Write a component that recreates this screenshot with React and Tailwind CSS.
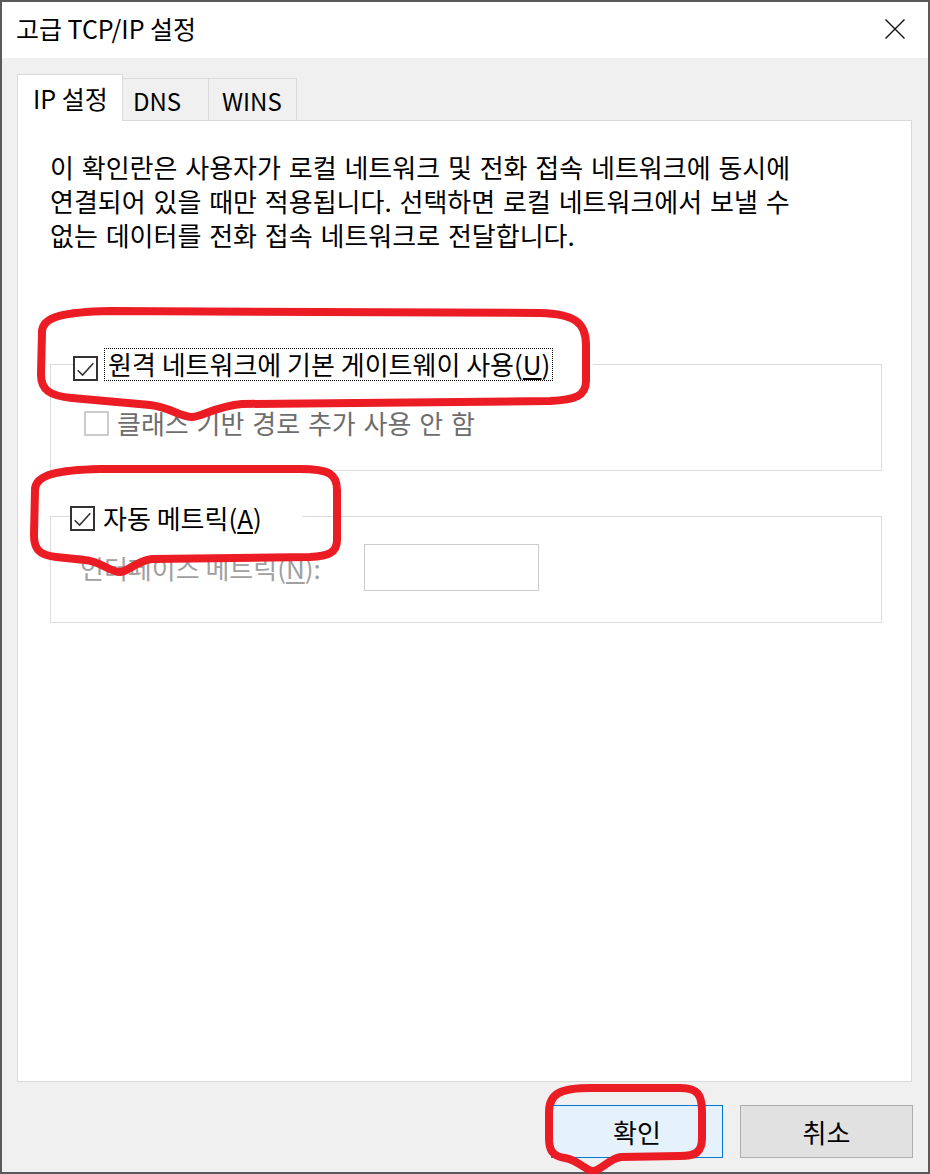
import React from "react";

function Check({ checked = false, disabled = false }) {
  return (
    <div
      className={
        "w-[25px] h-[25px] shrink-0 border-2 bg-white flex items-center justify-center " +
        (disabled ? "border-[#cccccc]" : "border-[#333333]")
      }
    >
      {checked && (
        <svg width="21" height="21" viewBox="0 0 21 21">
          <path d="M2.7 12.2 L7.6 17 L18.3 5.2" fill="none" stroke="#333333" strokeWidth="1.6" />
        </svg>
      )}
    </div>
  );
}

export default function App() {
  return (
    <div className="relative w-[930px] h-[1174px] font-['Noto_Sans_CJK_KR',sans-serif] text-black">
      <div className="w-[930px] h-[1174px] border-2 border-[#5a5a5a] bg-[#f0f0f0] flex flex-col">
        {/* title bar */}
        <div className="h-[56px] bg-white flex items-center justify-between pl-[14px] pr-[23px] shrink-0">
          <span className="text-[25px] leading-none -mt-[3px]">고급 TCP/IP 설정</span>
          <svg width="20" height="20" viewBox="0 0 20 20" className="-mt-[2px]">
            <path d="M0.5 0.5 L19.5 19.5 M19.5 0.5 L0.5 19.5" stroke="#111" strokeWidth="1.4" />
          </svg>
        </div>

        {/* body */}
        <div className="pl-[15px] pt-[16px] flex flex-col">
          {/* tabs */}
          <div className="flex items-end h-[46px]">
            <div className="relative z-10 h-[47px] -mb-px w-[106px] bg-white border-l border-t border-r border-[#d9d9d9] pl-[15px] flex items-center text-[25px] leading-none">
              <span className="mt-[1px]">IP 설정</span>
            </div>
            <div className="h-[42px] w-[86px] bg-[#f0f0f0] border-t border-r border-[#d9d9d9] pl-[10px] flex items-center text-[24px] leading-none">
              <span className="mt-[2px]">DNS</span>
            </div>
            <div className="h-[42px] w-[88px] bg-[#f0f0f0] border-t border-r border-[#d9d9d9] pl-[13px] flex items-center text-[24px] leading-none">
              <span className="mt-[2px]">WINS</span>
            </div>
          </div>

          {/* panel */}
          <div className="w-[895px] h-[962px] bg-white border border-[#d9d9d9] pl-[32px] pt-[29px] flex flex-col">
            <p className="text-[26px] leading-[34px] [word-spacing:2px]">
              <span className="block whitespace-nowrap">이 확인란은 사용자가 로컬 네트워크 및 전화 접속 네트워크에 동시에</span>
              <span className="block whitespace-nowrap">연결되어 있을 때만 적용됩니다. 선택하면 로컬 네트워크에서 보낼 수</span>
              <span className="block whitespace-nowrap">없는 데이터를 전화 접속 네트워크로 전달합니다.</span>
            </p>

            {/* group 1 */}
            <div className="mt-[112px] w-[832px] h-[107px] border border-[#dcdcdc] flex flex-col">
              <div className="-mt-[17px] ml-[22px] self-start flex items-end h-[33px] bg-white pr-[40px]">
                <Check checked />
                <div className="ml-[6px] h-[33px] border border-dotted border-black pl-[3px] pr-[2px] flex items-center text-[26px] leading-none whitespace-nowrap">
                  <span className="-mt-[1px]">
                    원격 네트워크에 기본 게이트웨이 사용(<span className="underline underline-offset-[3px]">U</span>)
                  </span>
                </div>
              </div>
              <div className="mt-[30px] ml-[33px] flex items-center">
                <Check disabled />
                <span className="ml-[8px] text-[26px] leading-none text-[#6d6d6d] whitespace-nowrap -mt-[1px] [word-spacing:2px]">
                  클래스 기반 경로 추가 사용 안 함
                </span>
              </div>
            </div>

            {/* group 2 */}
            <div className="mt-[45px] w-[832px] h-[107px] border border-[#dcdcdc] flex flex-col">
              <div className="-mt-[11px] ml-[19px] self-start flex items-center h-[25px] bg-white pr-[40px]">
                <Check checked />
                <span className="ml-[8px] text-[26px] leading-none whitespace-nowrap -mt-[1px]">
                  자동 메트릭(<span className="underline underline-offset-[3px]">A</span>)
                </span>
              </div>
              <div className="mt-[13px] ml-[29px] flex items-center">
                <span className="w-[284px] text-[26px] leading-none text-[#a0a0a0] whitespace-nowrap">
                  인터페이스 메트릭(<span className="underline underline-offset-[3px]">N</span>):
                </span>
                <div className="w-[175px] h-[47px] border border-[#cccccc] bg-white" />
              </div>
            </div>
          </div>

          {/* buttons */}
          <div className="mt-[23px] flex justify-end gap-[17px] pr-[15px]">
            <div className="w-[172px] h-[53px] border border-[#0078d7] bg-[#e5f1fb] flex items-center justify-center text-[26px] leading-none">
              확인
            </div>
            <div className="w-[173px] h-[53px] border border-[#adadad] bg-[#e1e1e1] flex items-center justify-center text-[26px] leading-none">
              취소
            </div>
          </div>
        </div>
      </div>

      {/* red annotations */}
      <svg
        className="absolute top-0 left-0 pointer-events-none"
        width="930"
        height="1174"
        viewBox="0 0 930 1174"
      >
        <g fill="none" stroke="#ec1c24" strokeWidth="8" strokeLinejoin="round" strokeLinecap="round">
          <path d="M42 332 C42 316 66 312 110 311 L540 313 C574 314 586 322 586 345 L586 381 C586 396 575 400 550 401 L242 404 C216 406 202 417 192 417 C180 417 170 407 150 405 L72 398 C50 396 41 390 41 375 Z" />
          <path d="M35 490 C35 474 60 470 100 469 L300 469 C329 469 337 474 337 490 L337 540 C337 553 328 556 310 557 L152 559 C136 561 128 572 120 572 C110 572 100 561 85 560 L56 557 C38 555 34 548 34 535 Z" />
          <path d="M549 1112 C549 1093 561 1088 592 1088 L680 1088 C698 1088 702 1095 702 1112 L702 1138 C702 1152 696 1156 680 1156 L621 1157 C610 1158 600 1171 593 1171 C586 1171 578 1160 565 1158 C552 1156 549 1150 549 1138 Z" />
        </g>
      </svg>
    </div>
  );
}
